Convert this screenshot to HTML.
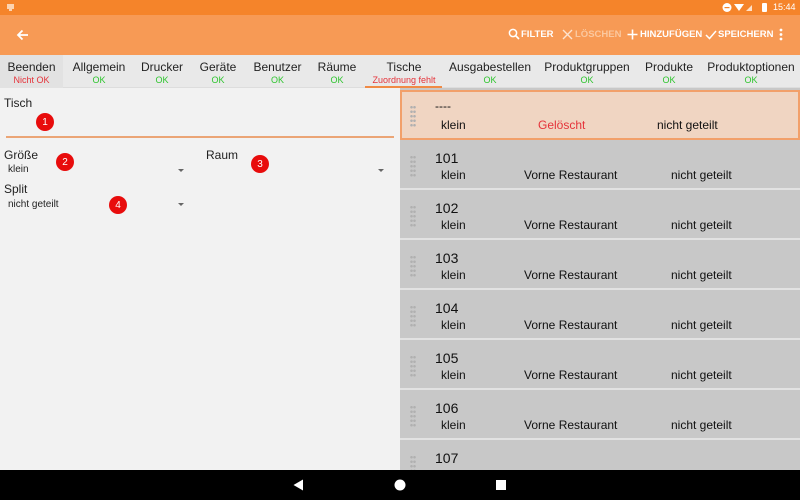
<!DOCTYPE html>
<html><head><meta charset="utf-8">
<style>
*{margin:0;padding:0;box-sizing:border-box}
body{width:800px;height:500px;overflow:hidden;position:relative;background:#f2f2f2;font-family:"Liberation Sans","DejaVu Sans",sans-serif;color:#222}
.abs{position:absolute}
#status{left:0;top:0;width:800px;height:15px;background:#f5842a}
#bar{left:0;top:15px;width:800px;height:40px;background:#f79a55}
.act{top:29px;font-size:9.5px;font-weight:bold;color:#fff}
#tabs{left:0;top:55px;width:800px;height:33px;background:#e9e9e9;border-bottom:1px solid #ddd}
.tab{top:60px;text-align:center;font-size:12px;color:#222}
.tab .s{font-size:9px;color:#2ec52e;display:block;margin-top:1px}
.tab .r{color:#e5333a}
.lbl{font-size:12px;color:#222}
.val{font-size:10px;color:#222}
.badge{width:18px;height:18px;border-radius:9px;background:#e80c0c;color:#fff;font-size:10px;display:flex;align-items:center;justify-content:center}
.arrow{width:0;height:0;border-left:3px solid transparent;border-right:3px solid transparent;border-top:3px solid #666}
#list{left:400px;top:88px;width:400px;height:382px;background:#c8c8c8}
.row{position:absolute;left:400px;width:400px;height:48px;background:#c8c8c8}
.sep{position:absolute;left:400px;width:400px;height:2px;background:#e2e2e2}
.num{position:absolute;left:35px;top:10px;font-size:14px;color:#111}
.c{position:absolute;top:28px;font-size:12px;color:#111}
.h{position:absolute;left:10px;top:15px;width:6px;height:22px;
background-image:radial-gradient(circle,#b0b0b0 1.2px,transparent 1.4px);background-size:3px 4.5px}
#nav{left:0;top:470px;width:800px;height:30px;background:#000}
</style></head><body>
<div id="status" class="abs"></div>
<svg class="abs" style="left:6px;top:3px" width="10" height="9"><rect x="1" y="1" width="7" height="5" fill="#fcd3b0"/><rect x="3" y="6" width="3" height="2" fill="#fcd3b0"/></svg>
<svg class="abs" style="left:722px;top:2px" width="48" height="11">
<circle cx="5" cy="5.5" r="4.5" fill="#fff"/><rect x="2.5" y="5" width="5" height="1.2" fill="#f5842a"/>
<path d="M12 2 L22 2 L17 9 Z" fill="#fff"/><path d="M24 9 L30 3 L30 9Z" fill="#fde0c8"/>
<rect x="40" y="1" width="5" height="9" rx="1" fill="#fff"/></svg>
<div class="abs" style="left:773px;top:2px;font-size:9px;color:#fff">15:44</div>
<div id="bar" class="abs"></div>
<svg class="abs" style="left:16px;top:29px" width="13" height="12"><path d="M12 6H2M6.5 1.5L2 6l4.5 4.5" stroke="#fff" stroke-width="1.8" fill="none"/></svg>
<svg class="abs" style="left:508px;top:28px" width="12" height="12"><circle cx="5" cy="5" r="3.6" stroke="#fff" stroke-width="1.5" fill="none"/><path d="M7.5 7.5L11 11" stroke="#fff" stroke-width="1.6"/></svg>
<div class="abs act" style="left:521px">FILTER</div>
<svg class="abs" style="left:562px;top:29px" width="11" height="11"><path d="M1 1L10 10M10 1L1 10" stroke="#fde3cf" stroke-width="1.4"/></svg>
<div class="abs act" style="left:575px;color:#fbc89f">LÖSCHEN</div>
<svg class="abs" style="left:627px;top:29px" width="11" height="11"><path d="M5.5 0.5V10.5M0.5 5.5H10.5" stroke="#fff" stroke-width="1.6"/></svg>
<div class="abs act" style="left:640px">HINZUFÜGEN</div>
<svg class="abs" style="left:705px;top:29px" width="12" height="11"><path d="M1 6l3.5 3.5L11 2" stroke="#fff" stroke-width="1.5" fill="none"/></svg>
<div class="abs act" style="left:718px">SPEICHERN</div>
<svg class="abs" style="left:779px;top:28px" width="4" height="13"><circle cx="2" cy="2" r="1.4" fill="#fff"/><circle cx="2" cy="6.5" r="1.4" fill="#fff"/><circle cx="2" cy="11" r="1.4" fill="#fff"/></svg>

<div id="tabs" class="abs"></div>
<div class="abs" style="left:0;top:55px;width:63px;height:33px;background:#e2e2e2"></div>
<div class="abs tab" style="left:0;width:63px">Beenden<span class="s r">Nicht OK</span></div>
<div class="abs tab" style="left:68px;width:62px">Allgemein<span class="s">OK</span></div>
<div class="abs tab" style="left:136px;width:52px">Drucker<span class="s">OK</span></div>
<div class="abs tab" style="left:195px;width:46px">Geräte<span class="s">OK</span></div>
<div class="abs tab" style="left:250px;width:55px">Benutzer<span class="s">OK</span></div>
<div class="abs tab" style="left:314px;width:46px">Räume<span class="s">OK</span></div>
<div class="abs tab" style="left:366px;width:76px">Tische<span class="s r">Zuordnung fehlt</span></div>
<div class="abs" style="left:365px;top:86px;width:77px;height:2px;background:#f08a45"></div>
<div class="abs tab" style="left:447px;width:86px">Ausgabestellen<span class="s">OK</span></div>
<div class="abs tab" style="left:544px;width:86px">Produktgruppen<span class="s">OK</span></div>
<div class="abs tab" style="left:642px;width:54px">Produkte<span class="s">OK</span></div>
<div class="abs tab" style="left:707px;width:88px">Produktoptionen<span class="s">OK</span></div>

<div class="abs lbl" style="left:4px;top:96px">Tisch</div>
<div class="abs badge" style="left:36px;top:113px">1</div>
<div class="abs" style="left:6px;top:136px;width:388px;height:2px;background:#eba576"></div>
<div class="abs lbl" style="left:4px;top:148px">Größe</div>
<div class="abs badge" style="left:56px;top:153px">2</div>
<div class="abs val" style="left:8px;top:164px">klein</div>
<div class="abs arrow" style="left:178px;top:169px"></div>
<div class="abs lbl" style="left:206px;top:148px">Raum</div>
<div class="abs badge" style="left:251px;top:155px">3</div>
<div class="abs arrow" style="left:378px;top:169px"></div>
<div class="abs lbl" style="left:4px;top:182px">Split</div>
<div class="abs badge" style="left:109px;top:196px">4</div>
<div class="abs val" style="left:8px;top:199px">nicht geteilt</div>
<div class="abs arrow" style="left:178px;top:203px"></div>

<div id="list" class="abs"></div>
<div class="row" style="top:90px;height:50px;background:#f0d5c2;border:2px solid #f2a06a">
<div class="h" style="left:8px;top:13px"></div><div class="num" style="left:33px;top:7px;font-size:12px">----</div>
<div class="c" style="left:39px;top:26px">klein</div><div class="c" style="left:136px;top:26px;color:#e5333a">Gelöscht</div><div class="c" style="left:255px;top:26px">nicht geteilt</div></div>
<div class="sep" style="top:188px"></div><div class="sep" style="top:238px"></div><div class="sep" style="top:288px"></div><div class="sep" style="top:338px"></div><div class="sep" style="top:388px"></div><div class="sep" style="top:438px"></div>
<div class="row" style="top:140px"><div class="h"></div><div class="num">101</div><div class="c" style="left:41px">klein</div><div class="c" style="left:124px">Vorne Restaurant</div><div class="c" style="left:271px">nicht geteilt</div></div>
<div class="row" style="top:190px"><div class="h"></div><div class="num">102</div><div class="c" style="left:41px">klein</div><div class="c" style="left:124px">Vorne Restaurant</div><div class="c" style="left:271px">nicht geteilt</div></div>
<div class="row" style="top:240px"><div class="h"></div><div class="num">103</div><div class="c" style="left:41px">klein</div><div class="c" style="left:124px">Vorne Restaurant</div><div class="c" style="left:271px">nicht geteilt</div></div>
<div class="row" style="top:290px"><div class="h"></div><div class="num">104</div><div class="c" style="left:41px">klein</div><div class="c" style="left:124px">Vorne Restaurant</div><div class="c" style="left:271px">nicht geteilt</div></div>
<div class="row" style="top:340px"><div class="h"></div><div class="num">105</div><div class="c" style="left:41px">klein</div><div class="c" style="left:124px">Vorne Restaurant</div><div class="c" style="left:271px">nicht geteilt</div></div>
<div class="row" style="top:390px"><div class="h"></div><div class="num">106</div><div class="c" style="left:41px">klein</div><div class="c" style="left:124px">Vorne Restaurant</div><div class="c" style="left:271px">nicht geteilt</div></div>
<div class="row" style="top:440px"><div class="h"></div><div class="num">107</div></div>

<div id="nav" class="abs"></div>
<svg class="abs" style="left:293px;top:479px" width="11" height="12"><path d="M10 0.5V11.5L0.5 6Z" fill="#fff"/></svg>
<svg class="abs" style="left:394px;top:479px" width="12" height="12"><circle cx="6" cy="6" r="5.5" fill="#fff"/></svg>
<div class="abs" style="left:496px;top:480px;width:10px;height:10px;background:#fff"></div>
</body></html>
